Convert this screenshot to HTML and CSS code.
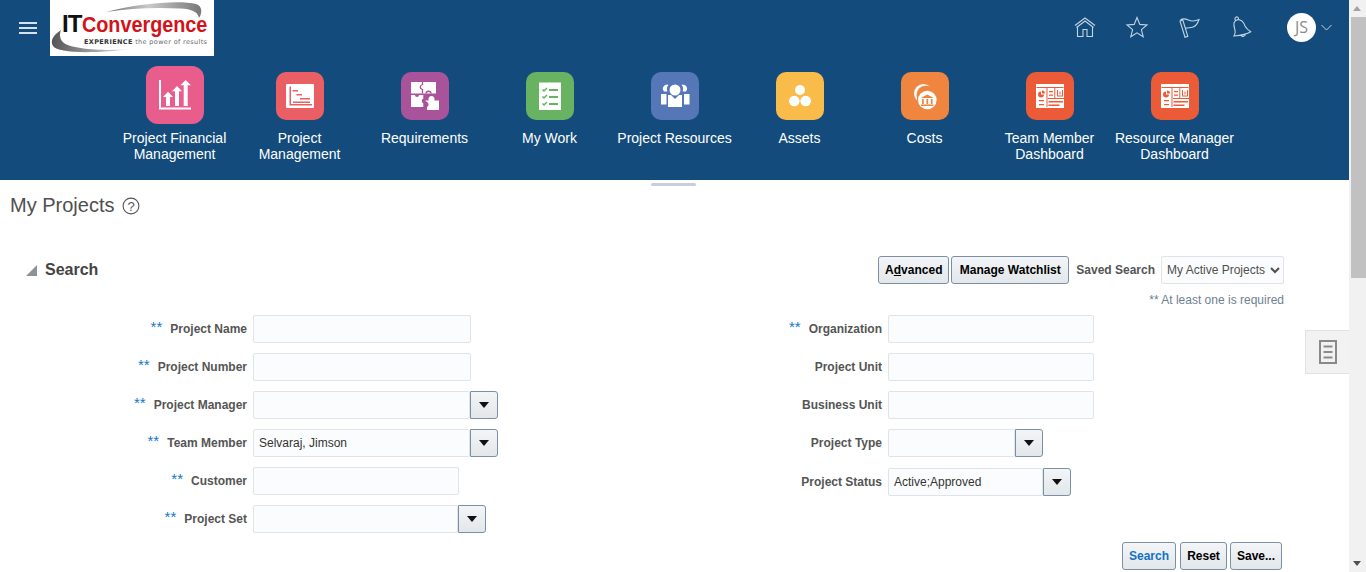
FILE: index.html
```html
<!DOCTYPE html>
<html lang="en">
<head>
<meta charset="utf-8">
<title>My Projects</title>
<link rel="stylesheet" href="styles.css">
</head>
<body>
<div class="app">
  <main class="main">
    <header class="header">
      <div class="topbar">
        <button class="burger" aria-label="Menu"><span></span><span></span><span></span></button>
        <div class="logo">
          <svg width="164" height="56" viewBox="0 0 164 56">
            <defs>
              <linearGradient id="sw" x1="0" x2="1" y1="0" y2="0"><stop offset="0" stop-color="#6f6f6f"/><stop offset=".45" stop-color="#c9c9c9"/><stop offset="1" stop-color="#777"/></linearGradient>
              <linearGradient id="sw2" x1="0" x2="1" y1="0" y2="0"><stop offset="0" stop-color="#555"/><stop offset=".6" stop-color="#aaa"/><stop offset="1" stop-color="#e6e6e6"/></linearGradient>
            </defs>
            <path d="M56 12C90 3 130 0 146 4 153 6 152 14 149 18 148 12 142 9 130 8.500 104 7 80 8.500 56 12Z" fill="url(#sw)"/>
            <path d="M11 30C3 35 0 41 3 46 8 53 40 54 82 49 58 51 24 50 14 43 10 40 9 35 11 30Z" fill="url(#sw2)"/>
            <text x="12" y="32" class="logo-it">IT</text>
            <text transform="translate(32 32) scale(.9 1)" class="logo-conv">Convergence</text>
            <text x="34" y="44" class="logo-tag" textLength="123"><tspan class="logo-tag-b">EXPERIENCE</tspan> the power of results</text>
          </svg>
        </div>
        <nav class="quick">
          <svg class="qi" width="24" height="24" viewBox="0 0 24 24"><path d="M2 10.500 12 3l10 7.500M3.500 12.500 12 6l8.500 6.500M4.500 12v9.500h5.500v-7h4v7h5.500V12" fill="none"/></svg>
          <svg class="qi" width="24" height="24" viewBox="0 0 24 24"><path d="M12 2.500l2.800 6.900 7.200.5-5.600 4.700 1.800 7.100L12 17.800l-6.200 3.900 1.800-7.100L2 9.900l7.200-.5z" fill="none"/></svg>
          <svg class="qi" width="24" height="24" viewBox="0 0 24 24"><path d="M3 6 5.800 5l5 16.300-2.800.9zM3.500 5C8 1.500 12 6.500 15.500 6c2.500 0 5-1 6.500-1.500-1 3-2.500 6.500-6 7.500-3 1-4.500.5-8 1.500" fill="none"/></svg>
          <svg class="qi" width="24" height="24" viewBox="0 0 24 24"><path d="M5 8C6 5 9 4 11 5c3 1 4 3 5 6 1 2 3 4 5.700 5.700C18 19 10 20.500 5 21c1.500-2 1.500-4 1-6-.5-2-1.500-4.500-1-7zM6.500 5a1.800 1.800 0 1 1 3-1M12 20.300a2.500 2.500 0 0 0 4.500-1.500" fill="none"/></svg>
        </nav>
        <div class="user">
          <span class="avatar">JS</span>
          <svg class="caret" width="11" height="7" viewBox="0 0 11 7"><path d="M.5 1 5.500 6l5-5" fill="none"/></svg>
        </div>
      </div>
      <ul class="apps">
        <li class="app-item">
          <span class="tile tile-big tile-pink">
            <svg width="58" height="58" viewBox="0 0 58 58"><path d="M13 14h2v27.500h30v2H13z" fill="#fff"/><path d="M22 25.700l5 5.300h-3v9h-4v-9h-3zM31 20l5 5.300h-3V40h-4V25.300h-3zM39.700 14l5.300 5.300h-3.300V40h-4V19.300h-3.300z" fill="#fff"/></svg>
          </span>
          <span class="app-label">Project Financial Management</span>
        </li>
        <li class="app-item">
          <span class="tile tile-red">
            <svg width="48" height="48" viewBox="0 0 48 48"><rect x="10" y="12" width="28" height="24" rx="1" fill="#fff"/><path d="M13.500 14.500h1.500v17.500h21v1.500H13.500z" fill="#ea5f64"/><path d="M16.500 18h5.500v1.500h-5.500zM20.500 22h5.500v1.500h-5.500zM24 26h10v1.500H24zM17 29.500h17V31H17z" fill="#ea5f64"/></svg>
          </span>
          <span class="app-label">Project Management</span>
        </li>
        <li class="app-item">
          <span class="tile tile-purple">
            <svg width="48" height="48" viewBox="0 0 48 48"><path d="M10 10h25v11.500H10z" fill="#fff"/><path d="M21.500 10v2.500c-3 1-3 4 0 5v4M25 21.500c0-3 5-3 5 0" fill="none" stroke="#a9539b" stroke-width="1.300"/><path d="M10 23h4a2 2 0 0 0 4 0h4.300v3.500c-2 1-2 4 0 5V35H10z" fill="#fff"/><path d="M24 28.500h3.500c-.5-3 1-4.500 3-4.500s3.500 1.500 3 4.500H38V38H26v-3c2-1 2-4 0-5z" fill="#fff"/></svg>
          </span>
          <span class="app-label">Requirements</span>
        </li>
        <li class="app-item">
          <span class="tile tile-green">
            <svg width="48" height="48" viewBox="0 0 48 48"><rect x="13" y="10.500" width="22" height="27.500" fill="#fff"/><path d="M16.500 17.500l1.500 1.500 3-3M16.500 24.500l1.500 1.500 3-3M16.500 31.500l1.500 1.500 3-3" fill="none" stroke="#67b361" stroke-width="1.500"/><path d="M23 17h9v2h-9zM23 24h9v2h-9zM23 31h9v2h-9z" fill="#67b361"/></svg>
          </span>
          <span class="app-label">My Work</span>
        </li>
        <li class="app-item">
          <span class="tile tile-blue">
            <svg width="48" height="48" viewBox="0 0 48 48"><circle cx="24" cy="18" r="5.500" fill="#fff"/><path d="M17 23h3l4 4 4-4h3v12H17zM10 22h5.500v10.500H10zM33 22h5.500v10.500H33z" fill="#fff"/><path d="M16.500 12.500c-4 0-6 4-3.500 7l3.500 0c-1-2-1-4.500 1-6.500zM31.500 12.500c4 0 6 4 3.500 7l-3.500 0c1-2 1-4.500-1-6.500z" fill="#fff"/></svg>
          </span>
          <span class="app-label">Project Resources</span>
        </li>
        <li class="app-item">
          <span class="tile tile-yellow">
            <svg width="48" height="48" viewBox="0 0 48 48"><circle cx="24" cy="18" r="5" fill="#fff"/><circle cx="18.300" cy="29" r="5.300" fill="#fff"/><circle cx="29.700" cy="29" r="5.300" fill="#fff"/></svg>
          </span>
          <span class="app-label">Assets</span>
        </li>
        <li class="app-item">
          <span class="tile tile-orange">
            <svg width="48" height="48" viewBox="0 0 48 48"><circle cx="22.500" cy="21.500" r="9.500" fill="#fff"/><circle cx="25" cy="23" r="9.500" fill="#f0853f"/><circle cx="26.300" cy="27" r="10.500" fill="#f0853f"/><circle cx="26.300" cy="28" r="9.300" fill="#fff"/><path d="M26.300 22.500l6.500 3.500H19.800zM21 27h1.800v5H21zM25.400 27h1.800v5h-1.800zM29.800 27h1.800v5h-1.800zM20 32.500h12.600V34H20z" fill="#f0853f"/></svg>
          </span>
          <span class="app-label">Costs</span>
        </li>
        <li class="app-item">
          <span class="tile tile-coral">
            <svg width="48" height="48" viewBox="0 0 48 48"><rect x="10" y="12" width="28" height="24" fill="#fff"/><path d="M10.500 15h27v1h-27zM20.500 16v19h1V16zM28.300 16v10h1V16zM21 26h17v1H21z" fill="#eb5b38"/><path d="M15 19.500a3 3 0 1 0 3 3h-3zM16 18.500v3h3a3 3 0 0 0-3-3zM13 28h5v1.200h-5zM13 32h5v1.200h-5zM23 19h4v1.200h-4zM23 22.500h4v1.200h-4zM31 18h1v5.500h4V18h1v6.500h-6zM33.500 19.500h1v3h-1zM22.500 29h14.500v1.500H22.500zM22.500 32.500h11v1.500h-11z" fill="#eb5b38"/></svg>
          </span>
          <span class="app-label">Team Member Dashboard</span>
        </li>
        <li class="app-item">
          <span class="tile tile-coral">
            <svg width="48" height="48" viewBox="0 0 48 48"><rect x="10" y="12" width="28" height="24" fill="#fff"/><path d="M10.500 15h27v1h-27zM20.500 16v19h1V16zM28.300 16v10h1V16zM21 26h17v1H21z" fill="#eb5b38"/><path d="M15 19.500a3 3 0 1 0 3 3h-3zM16 18.500v3h3a3 3 0 0 0-3-3zM13 28h5v1.200h-5zM13 32h5v1.200h-5zM23 19h4v1.200h-4zM23 22.500h4v1.200h-4zM31 18h1v5.500h4V18h1v6.500h-6zM33.500 19.500h1v3h-1zM22.500 29h14.500v1.500H22.500zM22.500 32.500h11v1.500h-11z" fill="#eb5b38"/></svg>
          </span>
          <span class="app-label">Resource Manager Dashboard</span>
        </li>
      </ul>
    </header>
    <div class="handle-row"><span class="handle"></span></div>
    <div class="title-row">
      <h1 class="title">My Projects</h1>
      <svg class="help" width="18" height="18" viewBox="0 0 18 18"><circle cx="9" cy="9" r="7.900" fill="none" stroke="#555" stroke-width="1.100"/><text x="9" y="13.500" class="help-q">?</text></svg>
    </div>
    <section class="search">
      <div class="search-head">
        <span class="disclose"></span>
        <h2 class="search-title">Search</h2>
        <div class="search-tools">
          <button class="btn">A<u>d</u>vanced</button>
          <button class="btn btn-watch">Manage Watchlist</button>
          <label class="saved-label">Saved Search</label>
          <select class="saved-select"><option>My Active Projects</option></select>
        </div>
      </div>
      <p class="req-note">** At least one is required</p>
      <div class="form">
        <div class="form-col">
          <div class="field"><label class="flabel"><span class="star">**</span>Project Name</label><input class="in w218"></div>
          <div class="field"><label class="flabel"><span class="star">**</span>Project Number</label><input class="in w218"></div>
          <div class="field"><label class="flabel"><span class="star">**</span>Project Manager</label><div class="combo"><input class="in w217"><button class="drop" aria-label="Open"></button></div></div>
          <div class="field"><label class="flabel"><span class="star">**</span>Team Member</label><div class="combo"><input class="in w217" value="Selvaraj, Jimson"><button class="drop" aria-label="Open"></button></div></div>
          <div class="field"><label class="flabel"><span class="star">**</span>Customer</label><input class="in w206"></div>
          <div class="field"><label class="flabel"><span class="star">**</span>Project Set</label><div class="combo"><input class="in w205"><button class="drop" aria-label="Open"></button></div></div>
        </div>
        <div class="form-col">
          <div class="field"><label class="flabel"><span class="star">**</span>Organization</label><input class="in w206"></div>
          <div class="field"><label class="flabel">Project Unit</label><input class="in w206"></div>
          <div class="field"><label class="flabel">Business Unit</label><input class="in w206"></div>
          <div class="field"><label class="flabel">Project Type</label><div class="combo"><input class="in w127"><button class="drop" aria-label="Open"></button></div></div>
          <div class="field field-status"><label class="flabel">Project Status</label><div class="combo"><input class="in w155" value="Active;Approved"><button class="drop" aria-label="Open"></button></div></div>
        </div>
      </div>
      <div class="actions">
        <button class="btn btn-search">Search</button>
        <button class="btn btn-reset">Reset</button>
        <button class="btn btn-save">Save...</button>
      </div>
    </section>
    <aside class="side-tab">
      <svg width="18" height="24" viewBox="0 0 18 24"><path d="M1 1h16v22H1z" fill="none" stroke="#8a8a8a" stroke-width="2"/><path d="M4.500 6.500h9M4.500 12h9M4.500 17.500h9" stroke="#8a8a8a" stroke-width="2"/></svg>
    </aside>
  </main>
  <div class="scrollbar">
    <span class="arrow arrow-up"></span>
    <span class="thumb"></span>
    <span class="arrow arrow-down"></span>
  </div>
</div>
</body>
</html>
```
FILE: styles.css
```css
* { box-sizing: border-box; }
html, body { margin: 0; padding: 0; height: 572px; overflow: hidden; background: #fff; }
body { font-family: "Liberation Sans", Arial, sans-serif; font-size: 12px; color: #4f4f4f; }
.app { display: flex; height: 572px; }
.main { flex: 1; position: relative; min-width: 0; overflow: hidden; }

.header { height: 180px; background: #134c7c; display: flex; flex-direction: column; }
.topbar { height: 56px; display: flex; align-items: flex-start; padding-left: 19px; }
.burger { width: 18px; height: 12px; margin: 22px 13px 0 0; padding: 0; border: 0; background: none; display: flex; flex-direction: column; justify-content: space-between; }
.burger span { display: block; height: 2px; background: #d6e1ea; }
.logo { width: 164px; height: 56px; background: #fff; flex: none; }
.logo svg { display: block; }
.logo-it { font: bold 24px "Liberation Sans", sans-serif; fill: #111; letter-spacing: -1px; }
.logo-conv { font: bold 22px "Liberation Sans", sans-serif; fill: #d3121a; }
.logo-tag { font: 6.500px "DejaVu Sans", sans-serif; fill: #666; }
.logo-tag-b { font-weight: bold; fill: #333; }
.quick { margin-left: auto; display: flex; gap: 28px; padding-top: 15px; }
.qi { display: block; }
.qi path { stroke: #c3d4e2; stroke-width: 1.100; }
.user { display: flex; align-items: center; gap: 5px; margin: 13px 17px 0 34px; }
.avatar { width: 29px; height: 29px; border-radius: 50%; background: #fff; color: #8b8b8b; font: 16px/29px "Open Sans", sans-serif; text-align: center; }
.caret path { stroke: #c3d4e2; stroke-width: 1; }

.apps { list-style: none; margin: 0; padding: 0 0 0 112px; display: flex; }
.app-item { width: 125px; display: flex; flex-direction: column; align-items: center; }
.tile { width: 48px; height: 48px; margin-top: 16px; border-radius: 10px; display: block; flex: none; }
.tile svg { display: block; }
.tile-big { width: 58px; height: 58px; margin: 10px 0 -4px; border-radius: 12px; }
.tile-pink { background: #e85d8b; }
.tile-red { background: #ea5f64; }
.tile-purple { background: #a9539b; }
.tile-green { background: #67b361; }
.tile-blue { background: #5577b8; }
.tile-yellow { background: #f9bb4a; }
.tile-orange { background: #f0853f; }
.tile-coral { background: #eb5b38; }
.app-label { margin-top: 10px; width: 122px; color: #fff; font-size: 14px; line-height: 16px; text-align: center; }

.handle-row { height: 6px; padding-top: 3px; display: flex; justify-content: center; padding-right: 2px; }
.handle { width: 45px; height: 3px; border-radius: 2px; background: #c9cedd; }

.title-row { height: 38px; display: flex; align-items: center; gap: 8px; padding-left: 10px; }
.title { margin: 0; font-size: 20px; font-weight: normal; color: #4f4f4f; }
.help { display: block; margin-top: 2px; }
.help-q { font: 13px "Liberation Sans", sans-serif; fill: #555; text-anchor: middle; }

.search { margin-top: 32px; }
.search-head { height: 28px; display: flex; align-items: center; padding: 0 65px 0 26px; }
.disclose { width: 0; height: 0; border-style: solid; border-width: 0 0 11px 11px; border-color: transparent transparent #8f9193 transparent; margin-right: 8px; }
.search-title { margin: 0; font-size: 16px; font-weight: bold; color: #444; }
.search-tools { margin-left: auto; display: flex; align-items: center; gap: 2px; }
.btn { height: 28px; padding: 0; border: 1px solid #7b90a4; border-radius: 3px; background: linear-gradient(#f3f5f7, #e3e7ea); font: bold 12px "Liberation Sans", sans-serif; color: #000; }
.search-tools .btn:first-child { width: 71px; }
.btn-watch { width: 118px; }
.saved-label { margin: 0 4px 0 5px; font-weight: bold; color: #555; }
.saved-select { width: 123px; height: 28px; padding: 0 0 0 1px; border: 1px solid #e0e4ea; border-radius: 2px; background: #fbfcfe; font: 12px "Liberation Sans", sans-serif; color: #4f4f4f; }
.req-note { margin: 8px 65px 0 0; height: 16px; line-height: 16px; text-align: right; color: #6d8193; }

.form { display: flex; margin-top: 7px; }
.form-col { width: 635px; display: flex; flex-direction: column; gap: 10px; }
.field { display: grid; grid-template-columns: 247px 1fr; column-gap: 6px; align-items: center; height: 28px; }
.field-status { margin-top: 1px; }
.flabel { display: flex; justify-content: flex-end; align-items: center; font-weight: bold; color: #555; }
.star { margin-right: 8px; margin-top: -5px; font-size: 15px; font-weight: normal; color: #0f78c8; }
.in { display: block; height: 28px; padding: 0 5px; border: 1px solid #dfe4ea; border-radius: 2px; background: #fbfcfe; font: 12px "Liberation Sans", sans-serif; color: #333; }
.w218 { width: 218px; }
.w217 { width: 217px; }
.w206 { width: 206px; }
.w205 { width: 205px; }
.w155 { width: 155px; }
.w127 { width: 127px; }
.combo { display: flex; }
.drop { width: 28px; height: 28px; padding: 0; border: 1px solid #7b90a4; border-radius: 0 3px 3px 0; background: linear-gradient(#f3f5f7, #e3e7ea); display: flex; align-items: center; justify-content: center; }
.drop::before { content: ""; width: 0; height: 0; border-style: solid; border-width: 6px 5px 0 5px; border-color: #111 transparent transparent transparent; }

.actions { display: flex; justify-content: flex-end; gap: 4px; margin-top: 9px; padding-right: 67px; }
.btn-search { width: 54px; color: #1273c4; }
.btn-reset { width: 47px; }
.btn-save { width: 52px; margin-left: -1px; }

.side-tab { position: absolute; top: 330px; right: 0; width: 44px; height: 44px; background: #f2f2f2; border: 1px solid #e2e2e2; border-right: 0; display: flex; align-items: center; justify-content: center; }
.side-tab svg { display: block; }

.scrollbar { width: 17px; flex: none; background: #f1f1f1; display: flex; flex-direction: column; align-items: flex-end; }
.thumb { width: 15px; height: 261px; background: #c1c1c1; }
.arrow { width: 17px; height: 17px; position: relative; flex: none; }
.arrow::before { content: ""; position: absolute; left: 4px; width: 0; height: 0; border-style: solid; }
.arrow-up::before { top: 6px; border-width: 0 4px 5px 4px; border-color: transparent transparent #a3a3a3 transparent; }
.arrow-down { margin-top: auto; }
.arrow-down::before { top: 6px; border-width: 5px 4px 0 4px; border-color: #505050 transparent transparent transparent; }
```
